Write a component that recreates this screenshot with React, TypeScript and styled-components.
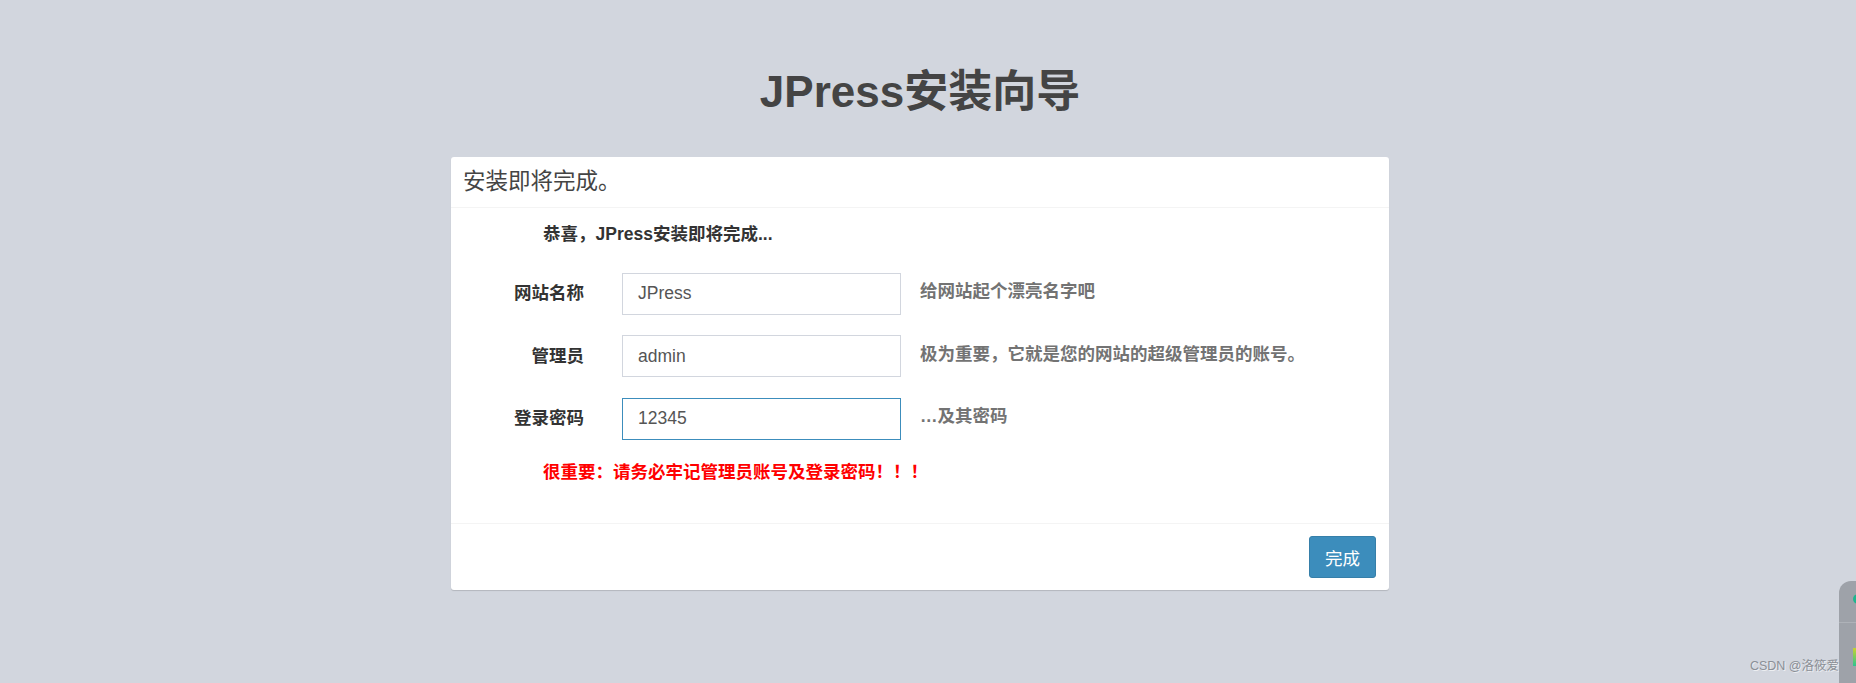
import styled, { createGlobalStyle } from "styled-components";

const GlobalStyle = createGlobalStyle`
    html, body {
        margin: 0;
        padding: 0;
        background: #d2d6de;
        height: 100%;
    }
    body {
        font-family: "Liberation Sans", Arial, "Noto Sans CJK SC", sans-serif;
        color: #333;
        overflow: hidden;
    }
`;

const fields = [
    { label: "网站名称", value: "JPress", help: "给网站起个漂亮名字吧", focused: false },
    { label: "管理员", value: "admin", help: "极为重要，它就是您的网站的超级管理员的账号。", focused: false },
    { label: "登录密码", value: "12345", help: "…及其密码", focused: true },
];

const App = () => {
    return (
        <Page>
            <GlobalStyle />
            <Wrapper>
                <Title>JPress安装向导</Title>
                <Box>
                    <BoxHeader>
                        <BoxTitle>安装即将完成。</BoxTitle>
                    </BoxHeader>
                    <BoxBody>
                        <Congrats>恭喜，JPress安装即将完成...</Congrats>
                        {fields.map((f) => (
                            <FormRow key={f.label}>
                                <Label>{f.label}</Label>
                                <Input focused={f.focused}>{f.value}</Input>
                                <Help>{f.help}</Help>
                            </FormRow>
                        ))}
                        <Warning>很重要：请务必牢记管理员账号及登录密码！！！</Warning>
                    </BoxBody>
                    <BoxFooter>
                        <Button>完成</Button>
                    </BoxFooter>
                </Box>
            </Wrapper>
            <Watermark>CSDN @洛筱爱</Watermark>
            <SideWidget>
                <WidgetDot />
                <WidgetLine />
                <WidgetBar />
            </SideWidget>
        </Page>
    );
};

export default App;

const Page = styled.div`
    position: relative;
    width: 1856px;
    height: 683px;
    overflow: hidden;
`;

const Wrapper = styled.div`
    width: 1840px;
    padding-top: 67px;
    display: flex;
    flex-direction: column;
    align-items: center;
`;

const Title = styled.h1`
    margin: 0 0 40px 0;
    font-size: 44px;
    line-height: 50px;
    font-weight: 700;
    color: #444;
    font-family: "Liberation Sans", Arial, "Noto Sans CJK SC", sans-serif;
`;

const Box = styled.div`
    width: 938px;
    background: #fff;
    border-radius: 3px;
    box-shadow: 0 1px 1px rgba(0, 0, 0, 0.15);
`;

const BoxHeader = styled.div`
    padding: 12.5px 12px;
    border-bottom: 1px solid #f4f4f4;
`;

const BoxTitle = styled.h3`
    margin: 0;
    font-size: 22.5px;
    line-height: 24.5px;
    font-weight: 400;
    color: #444;
`;

const BoxBody = styled.div`
    padding: 14px 12px 12px 0;
`;

const Congrats = styled.div`
    margin: 0 0 26px 92px;
    font-size: 17.5px;
    line-height: 25px;
    font-weight: 700;
    color: #333;
`;

const FormRow = styled.div`
    display: flex;
    align-items: flex-start;
    margin-bottom: 20.5px;
    &:last-of-type {
        margin-bottom: 0;
    }
`;

const Label = styled.div`
    width: 133px;
    padding-top: 8.5px;
    text-align: right;
    font-size: 17.5px;
    line-height: 25px;
    font-weight: 700;
    color: #333;
`;

const Input = styled.div<{ focused: boolean }>`
    box-sizing: border-box;
    width: 279px;
    height: 42px;
    margin-left: 38px;
    padding: 0 15px;
    display: flex;
    align-items: center;
    border: 1px solid ${(p) => (p.focused ? "#3c8dbc" : "#d2d6de")};
    font-size: 17.5px;
    color: #555;
`;

const Help = styled.div`
    margin-left: 19px;
    padding-top: 6.5px;
    font-size: 17.5px;
    line-height: 25px;
    font-weight: 700;
    color: #737373;
`;

const Warning = styled.div`
    margin: 20px 0 26px 92px;
    font-size: 17.5px;
    line-height: 25px;
    font-weight: 700;
    color: #ff0000;
`;

const BoxFooter = styled.div`
    display: flex;
    justify-content: flex-end;
    padding: 12px 13px 12px 12px;
    border-top: 1px solid #f4f4f4;
`;

const Button = styled.button`
    width: 67px;
    height: 42px;
    padding: 0;
    background: #3c8dbc;
    border: 1px solid #367fa9;
    border-radius: 3px;
    color: #fff;
    font-size: 17.5px;
    font-family: "Liberation Sans", Arial, "Noto Sans CJK SC", sans-serif;
`;

const Watermark = styled.div`
    position: absolute;
    right: 17px;
    top: 656px;
    font-size: 12.5px;
    line-height: 20px;
    color: #8b8f96;
    text-shadow: 1px 1px 0 rgba(255, 255, 255, 0.6);
`;

const SideWidget = styled.div`
    position: absolute;
    left: 1839px;
    top: 581px;
    width: 30px;
    height: 110px;
    background: #9ea2a9;
    border-radius: 12px 0 0 0;
`;

const WidgetDot = styled.div`
    position: absolute;
    left: 14px;
    top: 13px;
    width: 10px;
    height: 10px;
    border-radius: 50%;
    background: #1fb58f;
`;

const WidgetLine = styled.div`
    position: absolute;
    left: 0;
    top: 41px;
    width: 30px;
    height: 1px;
    background: #aeb2b8;
`;

const WidgetBar = styled.div`
    position: absolute;
    left: 14px;
    top: 67px;
    width: 10px;
    height: 18px;
    background: linear-gradient(180deg, #c9d22e, #2ec48f);
`;
